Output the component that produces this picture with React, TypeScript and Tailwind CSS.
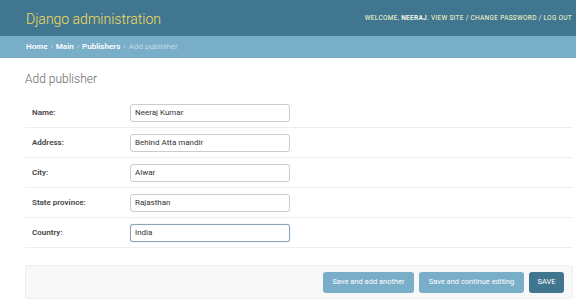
import React from 'react';

const fields = [
    { label: 'Name:', value: 'Neeraj Kumar' },
    { label: 'Address:', value: 'Behind Atta mandir' },
    { label: 'City:', value: 'Alwar' },
    { label: 'State province:', value: 'Rajasthan' },
    { label: 'Country:', value: 'India', focused: true },
];

const App: React.FC = () => {
    return (
        <div className="w-[576px] h-[304px] bg-white overflow-hidden font-['Roboto',sans-serif]">
            <div className="h-[36px] bg-[#417690] flex items-center justify-between pl-[26px] pr-[4px]">
                <h1 className="text-[14px] font-light text-[#f5dd5d] pt-[2px]">Django administration</h1>
                <div className="text-[6.5px] uppercase tracking-[0.3px] text-[#ffc] pt-[1px]">
                    Welcome, <strong className="font-bold text-[#f5f5e5]">Neeraj</strong>. View site / Change password / Log out
                </div>
            </div>
            <div className="h-[22px] bg-[#79aec8] flex items-center pl-[26px] text-[8px] text-[#c4dce8]">
                <span className="font-semibold text-white">Home</span>
                <span className="mx-[3px]">›</span>
                <span className="font-semibold text-white">Main</span>
                <span className="mx-[3px]">›</span>
                <span className="font-semibold text-white">Publishers</span>
                <span className="mx-[3px]">›</span>
                <span>Add publisher</span>
            </div>
            <div className="pl-[25px] pr-[3px]">
                <h2 className="text-[12px] font-light text-[#666] mt-[12px] mb-[10px]">Add publisher</h2>
                <div>
                    {fields.map((f) => (
                        <div key={f.label} className="h-[30px] flex items-center border-b border-[#eee]">
                            <label className="w-[105px] pl-[7px] text-[8px] font-semibold text-[#444]">{f.label}</label>
                            <input
                                type="text"
                                readOnly
                                value={f.value}
                                className={`w-[160px] h-[18px] rounded-[3px] border bg-white px-[4px] text-[8px] text-[#333] outline-none ${
                                    f.focused ? 'border-[#8aa4b8] shadow-[0_0_1px_#aac]' : 'border-[#ccc]'
                                }`}
                            />
                        </div>
                    ))}
                </div>
                <div className="mt-[17px] h-[34px] bg-[#f8f8f8] border border-[#eee] rounded-[3px] flex items-center justify-end gap-[5px] pr-[8px]">
                    <button className="h-[21px] w-[91px] rounded-[3px] bg-[#79aec8] text-white text-[7.5px]">Save and add another</button>
                    <button className="h-[21px] w-[105px] rounded-[3px] bg-[#79aec8] text-white text-[7.5px]">Save and continue editing</button>
                    <button className="h-[21px] w-[35px] rounded-[3px] bg-[#417690] text-white text-[7.5px] uppercase">Save</button>
                </div>
            </div>
        </div>
    );
};

export default App;
